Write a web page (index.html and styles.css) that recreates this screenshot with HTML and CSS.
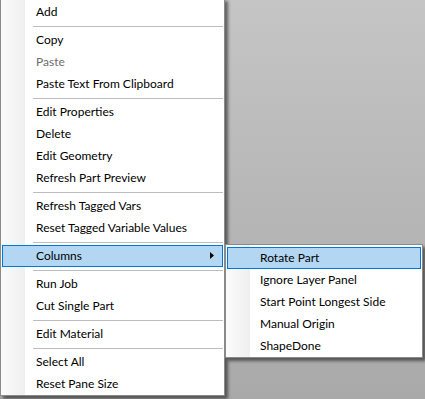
FILE: index.html
```html
<!DOCTYPE html>
<html>
<head>
<meta charset="utf-8">
<link rel="stylesheet" href="styles.css">
</head>
<body>
<div class="screen">
  <div class="menu main">
    <div class="item">Add</div>
    <div class="sep"></div>
    <div class="item">Copy</div>
    <div class="item disabled">Paste</div>
    <div class="item">Paste Text From Clipboard</div>
    <div class="sep"></div>
    <div class="item">Edit Properties</div>
    <div class="item">Delete</div>
    <div class="item">Edit Geometry</div>
    <div class="item">Refresh Part Preview</div>
    <div class="sep"></div>
    <div class="item">Refresh Tagged Vars</div>
    <div class="item">Reset Tagged Variable Values</div>
    <div class="sep"></div>
    <div class="item active"><span>Columns</span><svg class="arrow" width="4" height="7" viewBox="0 0 4 7"><polygon points="0,0 4,3.5 0,7" fill="#000"/></svg></div>
    <div class="sep"></div>
    <div class="item">Run Job</div>
    <div class="item">Cut Single Part</div>
    <div class="sep"></div>
    <div class="item">Edit Material</div>
    <div class="sep"></div>
    <div class="item">Select All</div>
    <div class="item">Reset Pane Size</div>
  </div>
  <div class="menu sub">
    <div class="item active">Rotate Part</div>
    <div class="item">Ignore Layer Panel</div>
    <div class="item">Start Point Longest Side</div>
    <div class="item">Manual Origin</div>
    <div class="item">ShapeDone</div>
  </div>
</div>
</body>
</html>
```
FILE: styles.css
```css
html, body {
  margin: 0;
  height: 100%;
  overflow: hidden;
}
body {
  background: linear-gradient(#c5c5c5, #a9a9a9);
  font-family: Lato, "Liberation Sans", sans-serif;
  font-size: 12px;
  color: #000;
}
.screen {
  display: flex;
  align-items: flex-start;
}
.menu {
  box-sizing: border-box;
  border: 1px solid #8a8a8a;
  background: linear-gradient(to right, #fbfbfb, #efefef) left top / 24px 100% no-repeat, #fff;
  box-shadow: 3px 3px 3px rgba(0, 0, 0, 0.5);
  padding: 2px 1px 0;
}
.main {
  width: 225px;
  margin-top: -2px;
}
.sub {
  width: 198px;
  margin-top: 244px;
}
.item {
  box-sizing: border-box;
  height: 22px;
  border: 1px solid transparent;
  display: flex;
  align-items: center;
  padding-left: 33px;
  padding-bottom: 1px;
  white-space: nowrap;
}
.sub .item {
  padding-left: 32px;
}
.item.active {
  background: #b3d7f3;
  border-color: #0078d7;
}
.item.disabled {
  color: #6d6d6d;
}
.arrow {
  margin-left: auto;
  margin-right: 8px;
}
.sep {
  box-sizing: border-box;
  height: 6px;
  padding-top: 3px;
}
.sep::before {
  content: "";
  display: block;
  height: 1px;
  margin-left: 31px;
  background: #bdbdbd;
}
```
